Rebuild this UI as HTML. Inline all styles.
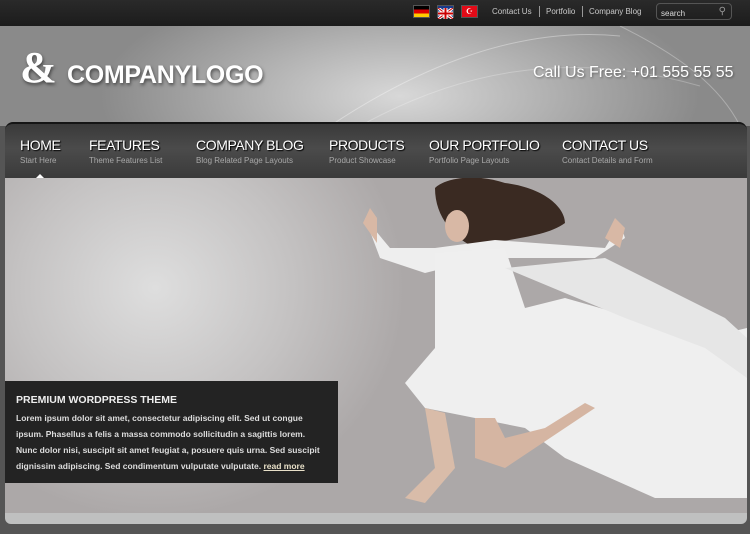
<!DOCTYPE html>
<html><head><style>
*{margin:0;padding:0;box-sizing:border-box}
body{width:750px;height:534px;overflow:hidden;background:#555;font-family:"Liberation Sans",sans-serif;position:relative}
.top{position:absolute;left:0;top:0;width:750px;height:26px;background:linear-gradient(#2a2a2a,#1c1c1c)}
.flag{position:absolute;top:5px;width:17px;height:13px;border:1px solid #555}
.tl{position:absolute;top:7px;font-size:8px;color:#c8c8c8}
.sep{position:absolute;top:6px;width:1px;height:11px;background:#999}
.search{position:absolute;left:656px;top:3px;width:76px;height:17px;border:1px solid #555;border-radius:4px;color:#ddd;font-size:8px;padding:5px 0 0 4px}
.header{position:absolute;left:0;top:26px;width:750px;height:100px;background:radial-gradient(ellipse 300px 120px at 400px 70px,#d8d8d8,#a9a9a9 60%,#8a8a8a)}
.logo{position:absolute;left:67px;top:61px;font-size:25px;font-weight:bold;color:#fff;text-shadow:1px 2px 3px rgba(0,0,0,.5);letter-spacing:-.3px}
.amp{position:absolute;left:20px;top:46px;font-size:44px;font-weight:bold;color:#fff;text-shadow:1px 2px 3px rgba(0,0,0,.5);font-family:"Liberation Serif",serif;line-height:1}
.call{position:absolute;left:533px;top:64px;font-size:16px;color:#fff;text-shadow:1px 1px 2px rgba(0,0,0,.4);white-space:nowrap}
.nav{position:absolute;left:5px;top:122px;width:742px;height:57px;background:linear-gradient(#3a3a3a,#4b4b4b 45%,#3a3a3a);border-radius:8px 8px 0 0;border-top:2px solid #151515}
.ni{position:absolute;top:13px;color:#fff;font-size:14px;letter-spacing:-.4px;text-shadow:1px 1px 1px #000;white-space:nowrap}
.ni small{display:block;font-size:8px;color:#a8a8a8;margin-top:3px;text-shadow:none;letter-spacing:0}
.slider{position:absolute;left:5px;top:178px;width:742px;height:336px;background:radial-gradient(ellipse 250px 230px at 150px 110px,#dedede,#c4c2c2 55%,#aca8a8);overflow:hidden}
.box{position:absolute;left:5px;top:381px;width:333px;height:102px;background:#232323;color:#eee;padding:13px 11px}
.box h3{font-size:10.5px;margin-bottom:4px}
.box p{font-size:8.5px;line-height:16px;font-weight:bold;color:#ddd}
.box u{color:#e8e0c8}
.bar{position:absolute;left:5px;top:513px;width:742px;height:11px;background:#bfc0c0;border-radius:0 0 6px 6px}
</style></head><body>
<div class="top">
<div class="flag" style="left:413px;background:linear-gradient(#000 33%,#d00 33% 66%,#fc0 66%)"></div>
<div class="flag" style="left:437px;background:#1a3a8a"><svg width="15" height="11"><path d="M0 0L15 11M15 0L0 11" stroke="#fff" stroke-width="3"/><path d="M0 0L15 11M15 0L0 11" stroke="#c00" stroke-width="1"/><path d="M7.5 0V11M0 5.5H15" stroke="#fff" stroke-width="4"/><path d="M7.5 0V11M0 5.5H15" stroke="#c00" stroke-width="2"/></svg></div>
<div class="flag" style="left:461px;background:#e30a17;color:#fff;font-size:8px;line-height:11px;text-align:center">☪</div>
<div class="tl" style="left:492px">Contact Us</div><div class="sep" style="left:539px"></div>
<div class="tl" style="left:546px">Portfolio</div><div class="sep" style="left:582px"></div>
<div class="tl" style="left:589px">Company Blog</div>
<div class="search">search<span style="position:absolute;right:5px;top:2px;font-size:10px;color:#999">⚲</span></div>
</div>
<div class="header">
<svg width="750" height="100" style="position:absolute;left:0;top:0"><path d="M330 100C420 40 520 0 620 10" stroke="rgba(255,255,255,.35)" fill="none"/><path d="M360 100C450 50 560 20 700 60" stroke="rgba(255,255,255,.25)" fill="none"/><path d="M620 0C680 30 720 60 740 100" stroke="rgba(255,255,255,.3)" fill="none"/></svg>
</div>
<div class="amp">&amp;</div>
<div class="logo">COMPANYLOGO</div>
<div class="call">Call Us Free: +01 555 55 55</div>
<div class="nav">
<div class="ni" style="left:15px">HOME<small>Start Here</small></div>
<div class="ni" style="left:84px">FEATURES<small>Theme Features List</small></div>
<div class="ni" style="left:191px">COMPANY BLOG<small>Blog Related Page Layouts</small></div>
<div class="ni" style="left:324px">PRODUCTS<small>Product Showcase</small></div>
<div class="ni" style="left:424px">OUR PORTFOLIO<small>Portfolio Page Layouts</small></div>
<div class="ni" style="left:557px">CONTACT US<small>Contact Details and Form</small></div>
<div style="position:absolute;left:30px;top:50px;border:5px solid transparent;border-bottom:5px solid #fff;border-top:0"></div>
</div>
<div class="slider">
<svg width="742" height="336" style="position:absolute;left:0;top:0">
<path d="M430 10C440 0 470 -5 500 5C540 10 560 30 560 45C540 60 500 60 470 70C450 60 430 40 430 10Z" fill="#3a2a22"/>
<ellipse cx="452" cy="48" rx="12" ry="16" fill="#d8b8a5"/>
<path d="M360 40L375 80L420 95L480 80L590 80L620 60L615 45L600 70L490 62L430 70L385 70Z" fill="#eeeeee"/>
<path d="M430 75L500 70L520 130L560 120L700 160L742 150V320L650 320L560 280L520 250L470 240L420 230L400 205L430 170Z" fill="#efefef"/>
<path d="M500 90L600 80L720 140L742 160L742 200L700 170L620 140Z" fill="#e6e6e6"/>
<path d="M420 230L430 290L400 320L420 325L450 290L440 235Z" fill="#d9bca9"/>
<path d="M470 240L470 280L500 290L560 250L590 230L580 225L540 250L500 260L490 240Z" fill="#d5b5a2"/>
<path d="M600 60L610 40L620 50L615 70Z" fill="#d8b8a5"/><path d="M358 45L365 30L372 40L372 65Z" fill="#d8b8a5"/>
</svg>
</div>
<div class="box"><h3>PREMIUM WORDPRESS THEME</h3><p>Lorem ipsum dolor sit amet, consectetur adipiscing elit. Sed ut congue ipsum. Phasellus a felis a massa commodo sollicitudin a sagittis lorem. Nunc dolor nisi, suscipit sit amet feugiat a, posuere quis urna. Sed suscipit dignissim adipiscing. Sed condimentum vulputate vulputate. <u>read more</u></p></div>
<div class="bar"></div>
</body></html>
